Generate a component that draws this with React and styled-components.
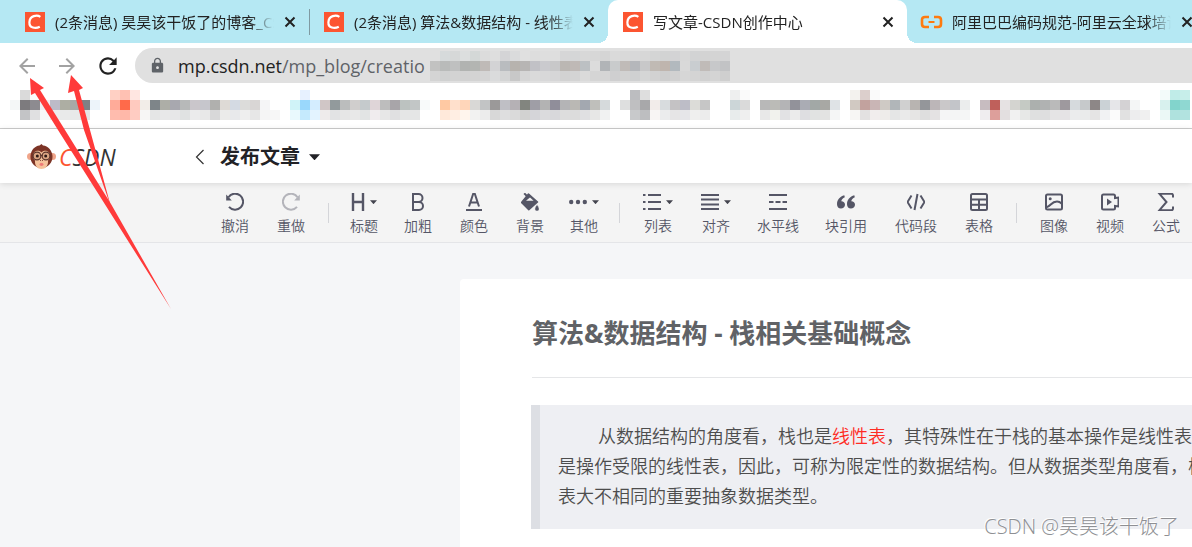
import React from "react";
import styled, { createGlobalStyle } from "styled-components";
import { MdArrowBack, MdArrowForward, MdLock, MdRefresh } from "react-icons/md";

const GlobalStyle = createGlobalStyle`
  * {
    box-sizing: border-box;
  }

  body {
    margin: 0;
    background: #f5f6f8;
    font-family: "Open Sans", "Noto Sans CJK SC", sans-serif;
    overflow: hidden;
  }

  button {
    border: 0;
    padding: 0;
    background: none;
    color: inherit;
    font: inherit;
    cursor: pointer;
  }
`;

const Screen = styled.div`
  position: relative;
  display: flex;
  flex-direction: column;
  min-height: 100vh;
  overflow: hidden;
`;

/* ---------- browser ---------- */

const TabStrip = styled.div`
  display: flex;
  height: 43px;
  padding-left: 10px;
  background: #b5e8f3;
  overflow: hidden;
`;

const Tab = styled.div`
  position: relative;
  flex: none;
  width: 299px;
  display: flex;
  align-items: center;
  gap: 10px;
  padding: 0 13px 0 15px;
  background: ${(props) => (props.$active ? "#fff" : "transparent")};
  border-radius: 10px 10px 0 0;

  /* rounded feet of the active tab */
  &::before,
  &::after {
    content: "";
    display: ${(props) => (props.$active ? "block" : "none")};
    position: absolute;
    bottom: 0;
    width: 10px;
    height: 10px;
  }

  &::before {
    left: -10px;
    background: radial-gradient(circle at 0 0, #b5e8f3 10px, #fff 10px);
  }

  &::after {
    right: -10px;
    background: radial-gradient(circle at 100% 0, #b5e8f3 10px, #fff 10px);
  }
`;

const TabDivider = styled.span`
  position: absolute;
  right: -1px;
  top: 9px;
  width: 1px;
  height: 26px;
  background: #7f9aa2;
`;

const Favicon = styled.svg`
  flex: none;
  width: 20px;
  height: 20px;
  overflow: visible;
`;

const TabTitle = styled.span`
  flex: 1;
  min-width: 0;
  overflow: hidden;
  white-space: nowrap;
  font-size: 15px;
  line-height: 24px;
  color: #222;
  mask-image: linear-gradient(to right, #000 195px, transparent 219px);
`;

const TabClose = styled.button`
  display: flex;
  flex: none;
  width: 12px;
`;

const NavBar = styled.div`
  display: flex;
  align-items: center;
  height: 45px;
  padding: 0 0 0 15px;
  background: #fff;
`;

const NavButton = styled.button`
  display: flex;
  width: 40px;
  font-size: 24px;
  color: ${(props) => (props.$dim ? "#a2a2a2" : "#222")};
`;

const AddressBar = styled.div`
  flex: 1;
  display: flex;
  align-items: center;
  height: 35px;
  padding-left: 14px;
  border-radius: 18px 0 0 18px;
  background: #e0e0e0;
  font-size: 18px;
  color: #5f6368;
  white-space: nowrap;
  overflow: hidden;
`;

const Url = styled.span`
  width: 252px;
  margin-left: 12px;

  b {
    font-weight: 400;
    color: #222;
  }
`;

const Bookmarks = styled.div`
  height: 41px;
  padding: 2px 0 0 10px;
  background: #fff;
  border-bottom: 1px solid #ccc;
  overflow: hidden;
`;

/* ---------- editor ---------- */

const Header = styled.header`
  position: relative;
  display: flex;
  align-items: center;
  height: 54px;
  padding: 2px 27px 0;
  background: #fff;
  box-shadow: 0 1px 6px rgba(0, 0, 0, 0.12);
`;

const Logo = styled.a`
  display: flex;
  align-items: center;
  gap: 3px;
  width: 168px;
  color: #333;
  font-size: 23px;
  font-style: italic;
  line-height: 24px;
  text-decoration: none;

  em {
    color: #fc5531;
  }
`;

const BackButton = styled.button`
  display: flex;
  width: 25px;
`;

const PublishMenu = styled.button`
  display: flex;
  align-items: center;
  gap: 9px;
  font-size: 20px;
  font-weight: 700;
  line-height: 28px;
  color: #222226;
`;

const Toolbar = styled.div`
  display: flex;
  height: 60px;
  padding-left: 207px;
  background: #f4f4f4;
  border-bottom: 1px solid #e4e5e8;
  overflow: hidden;
`;

const ToolButton = styled.button`
  flex: none;
  display: flex;
  flex-direction: column;
  align-items: center;
  gap: 4px;
  padding: 9px ${(props) => props.$pad || 14}px 0;
  font-size: 14px;
  font-weight: 350;
  line-height: 20px;
  color: #555666;
  white-space: nowrap;
`;

const ToolIcon = styled.span`
  display: flex;
  align-items: center;
  gap: 5px;
  height: 20px;
  opacity: ${(props) => (props.$dim ? 0.4 : 1)};
`;

const Divider = styled.span`
  flex: none;
  width: 1px;
  height: 20px;
  margin: 20px 9px 0;
  background: #d4d5d9;
`;

const Canvas = styled.main`
  flex: 1;
  display: flex;
  padding: 36px 0 0 460px;
`;

const Article = styled.article`
  flex: 1;
  min-width: 0;
  padding: 34px 0 0 72px;
  background: #fff;
  border-radius: 4px 0 0 0;
`;

const TitleInput = styled.input`
  display: block;
  width: 100%;
  height: 65px;
  padding: 0 0 27px;
  border: 0;
  border-bottom: 1px solid #e5e6e8;
  outline: 0;
  background: none;
  color: #606266;
  font-family: inherit;
  font-size: 26px;
  font-weight: 700;
`;

const Quote = styled.blockquote`
  margin: 27px 0 0 -1px;
  padding: 16px 0 18px 18px;
  border-left: 9px solid #dddfe4;
  background: #eeeff3;
  color: #4d4d4d;
  font-size: 18px;
  font-weight: 350;
  line-height: 30px;
  white-space: nowrap;
  overflow: hidden;

  p {
    margin: 0;
    text-indent: 40px;
  }

  strong {
    font-weight: 350;
    color: #fe2c24;
  }
`;

const Watermark = styled.span`
  position: absolute;
  right: 13px;
  bottom: 6px;
  font-size: 20px;
  font-weight: 300;
  line-height: 28px;
  color: #8e8f93;
  text-shadow: -1px -1px 0 #fff;
`;

const Annotation = styled.svg`
  position: absolute;
  left: 0;
  top: 0;
  pointer-events: none;
`;

/* Rows of 10px blocks. Each run is [first column, "rgb rgb ..."]. */
const urlBlocks = [
  [[1, "d6dadb d6d8d8 dcdede d4d8d7 dcdcdc dedede d4d4d6 dadbdc e0e0e0 dddddd dedede dedede d6d6d7 d5d6d7 d8d8d8 d7d7d7 d5d5d5 dadada d9d9d9 d8d8d9 d7d7d7 d4d5d5 d2d3d3 d3d3d5 d8d8d8 d2d3d4 d3d3d3 d4d4d4 d4d4d5"]],
  [[0, "c2c2c1 b9bbba bfc0c0 b1b3b1 b3b5b2 bfbab7 d3d3d5 b9bcbf b7b3ae b7b5b4 c1c1c6 cacace c8c8c9 bbb7b3 bfb9b6 bcc0c3 dcdcdc b1b4b7 c9cbcc c0bbb8 b5b7bb c8c8c9 c0bab4 bfb5ae b2b9be d9d9d9 c9cdd0 c0bbb8 c7c8ca c2c3c5"]],
  [[0, "d4d4d4 d0d1d1 d3d3d3 d2d2d2 d3d3d3 d5d5d5 dadbdc d4d5d5 c8c8c8 d6d6d6 dadada d8d8d9 d6d6d7 d2d2d2 d4d4d4 dadada d5d5d5 d5d5d5 cfcfd0 d2d2d2 cfd0d1 d5d6d6 d2d2d2 cecece d1d1d1 d6d6d6 d4d4d4 d1d1d1 d4d4d4 cfcfcf"]],
];

const bookmarkBlocks = [
  [
    [1, "dadada fbfbfb"],
    [10, "ffd0c4 ffc1b3 ffe6e1"],
    [29, "e7f1ff"],
    [62, "bcbdc0 dedede"],
    [72, "eeefef fafafa"],
    [84, "f3f2ee dccfcc fafafa"],
    [115, "f3fbfa c0ece8 c7eeea"],
  ],
  [
    [0, "f4f7f7 7d7b7e 8d8b90 ededf2 bdbbc8 adaea3 a8a9a8 7f8085 edf4fa"],
    [10, "ffab99 ff6a4a ffcabf f2ede8 7e8589 adaea7 a8a8af b7b9b9 cac6cb c6c6cc b0b0ae dedad6 d4dae3 dcdcda d9d6d5 f5f5f7"],
    [28, "d0f3f8 9ad8fc d4edff d0c6c6 929a9c bbbdbd d0cecd c5cacc dfd5d8 bdbdbd a8a5a9 bcc2c0 c2c6c6 f8fafa"],
    [43, "ffc9a3 ffe0cc ffd6ba d9d8d6 c2c4c5 9b9999 bfbfc5 b5b1b5 82857f 9f9ea6 b3b3b3 908e9a b4b4b6 bab8b4 a3a8b0 bfbfbb d6dadc"],
    [61, "dedfdf bfbfc1 a8a8aa f2ecea d8dcde c4c2c4 bdbdc7 dcdcd8 c6c6c6"],
    [72, "ccd6d8 dadada"],
    [75, "b8b8b8 bbbbb7 b4b4b6 92929a aaacb4 a2a8a6 a8a8a4 dfe3e6"],
    [84, "d1c9c2 c2a29e c9b5b5 cfcac5 b1b6b9 d0d0d0 b8b4b1 94969a bcb6b8 cac8c9 c3c5c9 ebeded"],
    [97, "c7bcc0 bf605b e6e2e3 d4d4d0 c5cac4 acb0ae b0b2b2 bababa 9e999e d6dadd c6c9cb 8d8787 cbd2d6 e6e6e9 d4d2d4 f4f6f6"],
    [115, "d8f1ee 82d4cc 8fd8d2"],
  ],
  [
    [1, "c3c4c6 e0e0e1 f7f7f7 ececee e9eaea e8e9e9 e3e4e5"],
    [10, "ffbcae ffb8a9 ffccc2 f7f6f5 e5e6e6 e8e8e9 e7e7e8 e0e2e2 ebebec e8e8e8 d8d8d9 ebebea e8e9eb eeeeee e7e7e7 f5f5f5 f7f7f7"],
    [28, "e9f9fd c5eafd e3f3ff eeebeb e2e3e4 e6e6e6 e8e8e8 e2e4e4 f0ecee e7e7e7 e0e0e1 e5e6e6 e5e6e6"],
    [43, "ffe9da ffeee3 fff5ed f2f2f1 ececec d8d8d8 dededf dadada d2d2d1 d5d5d9 dbdbdd d8d8db dddddd dcdcdc e0e0e2 e7e7e6 f1f2f2"],
    [62, "c8c9cb bdbec0 f8f5f4 ebeced e6e5e6 e6e6e9 efefee ececec"],
    [72, "e8ecec efefef"],
    [75, "e8e8e8 f1f2ed e2e2e4 ebebeb dedee1 e1e3e2 e3e3e2 f5f6f6"],
    [84, "f7f6f4 e3e1e1 f1eded eeecea e5e6e6 eaeaea e6e5e4 dedede e4e2e3 f5f5f6 f4f5f5 f5f6f6"],
    [97, "efedef dd9f9b e3dfe0 f1f1f1 e7e8e7 dfe0e0 dededf e5e4e5 e5e3e5 ebeced eaebeb e5e4e4 f1f2f3 fbfbfb e1e1e1 ededee f0f0f0"],
    [115, "ebf8f6 afe2de b2e3e0"],
  ],
];

const Blocks = styled.svg`
  display: block;
  flex: none;
`;

const Mosaic = ({ rows, columns }) => (
  <Blocks
    width={columns * 10}
    height={rows.length * 10}
    shapeRendering="crispEdges"
    aria-hidden="true"
  >
    {rows.map((runs, y) =>
      runs.map(([start, colors]) =>
        colors
          .split(" ")
          .map((color, i) => (
            <rect
              key={start + i}
              x={(start + i) * 10}
              y={y * 10}
              width="10"
              height="10"
              fill={"#" + color}
            />
          ))
      )
    )}
  </Blocks>
);

const CsdnFavicon = () => (
  <Favicon viewBox="0 0 20 20">
    <rect width="20" height="20" fill="#fc5531" />
    <path
      d="M15.4 4.8C12 2.6 4.8 3.4 4.4 10.2c-.3 6 6.2 6.8 10.4 4.6"
      fill="none"
      stroke="#fff"
      strokeWidth="2.2"
    />
  </Favicon>
);

const AliyunFavicon = () => (
  <Favicon viewBox="0 0 20 20" fill="none" stroke="#ff7a0e">
    <path
      d="M7 5H3C1 5 0 6 0 8v4c0 2 1 3 3 3h4M12 5h4c2 0 3 1 3 3v4c0 2-1 3-3 3h-4"
      strokeWidth="2.6"
    />
    <path d="M6.500 10h6" strokeWidth="2" />
  </Favicon>
);

const CloseIcon = () => (
  <svg width="12" height="12" viewBox="0 0 12 12" stroke="#222" strokeWidth="2">
    <path d="M1.5 1.5l9 9M10.5 1.5l-9 9" />
  </svg>
);

const Monkey = () => (
  <svg width="29" height="26" viewBox="0 0 29 26">
    <circle cx="3.5" cy="12.5" r="3.5" fill="#f0a58a" />
    <circle cx="25.5" cy="12.5" r="3.5" fill="#f0a58a" />
    <path
      d="M14.5 0l1.5 1.5C21 2 25 6 25.5 12c.3 6-4 12-11 12S3 18 3.5 12C4 6 8 2 12.5 1.6z"
      fill="#7c3426"
    />
    <path
      d="M14.5 8.500C12 5.500 6 6.500 6 12c0 2 1 3.500 2 4.500-.5 5 2.500 8.500 6.500 8.500s7-3.500 6.500-8.500c1-1 2-2.500 2-4.500 0-5.500-6-6.500-8.500-3.500z"
      fill="#f6c39c"
    />
    <g fill="none" stroke="#5b352d" strokeWidth="1.2">
      <circle cx="10" cy="12" r="3.9" fill="#dba583" />
      <circle cx="19" cy="12" r="3.9" fill="#dba583" />
      <path d="M13.5 11.5h2" />
    </g>
    <circle cx="10.3" cy="12" r="1.5" fill="#2e1b18" />
    <circle cx="18.7" cy="12" r="1.5" fill="#2e1b18" />
    <path d="M13 16.5h1M15 16.5h1" stroke="#8b5140" />
    <ellipse cx="14.5" cy="20.5" rx="2" ry="1.4" fill="#ef7a78" />
  </svg>
);

const Caret = ({ width = 7, color = "#44454f" }) => (
  <svg width={width} height={width / 2 + 1} viewBox="0 0 8 4.5" fill={color}>
    <path d="M0 0h8L4 4.5z" />
  </svg>
);

const iconPaths = {
  undo: (
    <>
      <path d="M3.500 5.200A8 8 0 1 1 4 14.800" />
      <path d="M1.200 2.400v6h5.600z" fill="currentColor" stroke="none" />
    </>
  ),
  redo: (
    <>
      <path d="M16.500 5.200A8 8 0 1 0 16 14.800" />
      <path d="M18.800 2.400v6h-5.600z" fill="currentColor" stroke="none" />
    </>
  ),
  bold: <path d="M5 2h5.500a4 4 0 0 1 0 8H5zM5 10h6a4 4 0 0 1 0 8H5z" />,
  color: <path d="M5 14.500L9.300 1.500h1.400L15 14.500M6.500 10.500h7M2 18h16" />,
  fill: (
    <>
      <path d="M4.200 1.300l5 5" />
      <path
        d="M8.500 2l9 8-8.700 7.600L1.500 10.500z"
        fill="currentColor"
        strokeLinejoin="round"
        strokeWidth="1.5"
      />
      <path d="M6 8.800l4-3.400 3.600 3.400z" fill="#f4f4f4" stroke="none" />
      <path
        d="M17 12.500c3.500 4.500 2 6.500 0 6.500s-3.500-2 0-6.500z"
        fill="currentColor"
        stroke="#f4f4f4"
        strokeWidth=".6"
      />
    </>
  ),
  more: (
    <g fill="currentColor" stroke="none">
      <circle cx="3.2" cy="10" r="2.2" />
      <circle cx="10" cy="10" r="2.2" />
      <circle cx="16.8" cy="10" r="2.2" />
    </g>
  ),
  list: <path d="M6 3h13M6 10h13M6 17h13M1 3h2.500M1 10h2.500M1 17h2.500" />,
  align: <path d="M1 3h18M1 7.600h18M1 12.400h18M1 17h18" />,
  line: <path d="M1 3h18M1 17h18M1 10h4.500M7.500 10h5M14.500 10H19" />,
  quote: (
    <path
      d="M8.300 3.200C4 4.500 1 7.500 1 12.200c0 2.800 1.700 4.300 3.900 4.300S9 15 9 12.800 7.500 9.300 5.300 9.200c.2-1.800 1.500-3 3.500-4zM18.300 3.200c-4.300 1.300-7.300 4.300-7.300 9 0 2.800 1.700 4.300 3.900 4.300S19 15 19 12.800s-1.500-3.500-3.700-3.600c.2-1.800 1.500-3 3.500-4z"
      fill="currentColor"
      stroke="none"
    />
  ),
  code: <path d="M5.500 3.500L1.500 10l4 6.500M14.500 3.500l4 6.500-4 6.500M11.500 2L8.500 18" />,
  table: (
    <>
      <rect x="2" y="2" width="16" height="16" rx="1.5" />
      <path d="M2 7.500h16M2 12.700h16M10 7.500V18" />
    </>
  ),
  image: (
    <>
      <rect x="2" y="2.500" width="16" height="15" rx="1.5" />
      <path d="M2 15.500c5-1 5-6 11-6 3 0 4 1.500 5 2.500" />
      <circle cx="6.2" cy="6.8" r="1.5" fill="currentColor" stroke="none" />
    </>
  ),
  video: (
    <>
      <path d="M3.500 2.500h10A1.500 1.500 0 0 1 15 4v2l3.500-.5v9L15 14v2a1.500 1.500 0 0 1-1.500 1.500h-10A1.500 1.500 0 0 1 2 16V4a1.500 1.500 0 0 1 1.500-1.500z" />
      <path d="M7 6.500v7l5-3.500z" fill="currentColor" stroke="none" />
    </>
  ),
  formula: <path d="M17 5.500V3.500Q17 1.800 15.500 1.800H3.500L10.500 10l-7 8.200h12q1.500 0 1.500-1.700v-2" />,
};

const Glyph = ({ name }) =>
  name === "heading" ? (
    <svg width="14" height="18" viewBox="0 0 14 18" stroke="currentColor" strokeWidth="2.4">
      <path d="M2 0v18M12 0v18M2 9h10" />
    </svg>
  ) : (
    <svg
      width="18"
      height="18"
      viewBox="1 1 18 18"
      fill="none"
      stroke="currentColor"
      strokeWidth="2"
    >
      {iconPaths[name]}
    </svg>
  );

const tools = [
  { icon: "undo", label: "撤消" },
  { icon: "redo", label: "重做", dim: true },
  null,
  { icon: "heading", label: "标题", menu: true, pad: 12 },
  { icon: "bold", label: "加粗" },
  { icon: "color", label: "颜色" },
  { icon: "fill", label: "背景" },
  { icon: "more", label: "其他", menu: true, pad: 11 },
  null,
  { icon: "list", label: "列表", menu: true },
  { icon: "align", label: "对齐", menu: true },
  { icon: "line", label: "水平线", pad: 12 },
  { icon: "quote", label: "块引用" },
  { icon: "code", label: "代码段" },
  { icon: "table", label: "表格" },
  null,
  { icon: "image", label: "图像" },
  { icon: "video", label: "视频" },
  { icon: "formula", label: "公式" },
];

const tabs = [
  { title: "(2条消息) 昊昊该干饭了的博客_CSDN博客", divider: true },
  { title: "(2条消息) 算法&数据结构 - 线性表" },
  { title: "写文章-CSDN创作中心", active: true },
  { title: "阿里巴巴编码规范-阿里云全球培训", aliyun: true },
];

const App = () => {
  return (
    <Screen>
      <GlobalStyle />
      <TabStrip>
        {tabs.map((tab) => (
          <Tab key={tab.title} $active={tab.active}>
            {tab.aliyun ? <AliyunFavicon /> : <CsdnFavicon />}
            <TabTitle>{tab.title}</TabTitle>
            <TabClose aria-label="关闭">
              <CloseIcon />
            </TabClose>
            {tab.divider && <TabDivider />}
          </Tab>
        ))}
      </TabStrip>
      <NavBar>
        <NavButton $dim aria-label="后退">
          <MdArrowBack />
        </NavButton>
        <NavButton $dim aria-label="前进">
          <MdArrowForward />
        </NavButton>
        <NavButton aria-label="刷新">
          <MdRefresh size={26} />
        </NavButton>
        <AddressBar>
          <MdLock size={17} />
          <Url>
            <b>mp.csdn.net</b>/mp_blog/creatio
          </Url>
          <Mosaic rows={urlBlocks} columns={30} />
        </AddressBar>
      </NavBar>
      <Bookmarks>
        <Mosaic rows={bookmarkBlocks} columns={119} />
      </Bookmarks>

      <Header>
        <Logo href="#" aria-label="CSDN">
          <Monkey />
          <span>
            <em>C</em>SDN
          </span>
        </Logo>
        <BackButton aria-label="返回">
          <svg width="10" height="16" viewBox="0 0 10 16" fill="none" stroke="#333" strokeWidth="1.2">
            <path d="M8.5 1L1.5 8l7 7" />
          </svg>
        </BackButton>
        <PublishMenu>
          发布文章
          <Caret width={11} color="#222226" />
        </PublishMenu>
      </Header>
      <Toolbar>
        {tools.map((tool, index) =>
          tool ? (
            <ToolButton key={tool.icon} $pad={tool.pad}>
              <ToolIcon $dim={tool.dim}>
                <Glyph name={tool.icon} />
                {tool.menu && <Caret />}
              </ToolIcon>
              {tool.label}
            </ToolButton>
          ) : (
            <Divider key={index} />
          )
        )}
      </Toolbar>
      <Canvas>
        <Article>
          <TitleInput aria-label="文章标题" defaultValue="算法&数据结构 - 栈相关基础概念" />
          <Quote>
            <p>
              从数据结构的角度看，栈也是<strong>线性表</strong>
              ，其特殊性在于栈的基本操作是线性表
              <br />
              是操作受限的线性表，因此，可称为限定性的数据结构。但从数据类型角度看，栈
              <br />
              表大不相同的重要抽象数据类型。
            </p>
          </Quote>
        </Article>
      </Canvas>

      <Watermark>CSDN @昊昊该干饭了</Watermark>
      <Annotation width="180" height="320" fill="#ff3a3a">
        <path d="M30 78L44 88L40 90L65 130L111 204L171 309L106 206L58 130L35 93L31 95z" />
        <path d="M71 75L83 88L79 90L90 130L111 207L84 130L74 91L68 93z" />
      </Annotation>
    </Screen>
  );
};

export default App;
